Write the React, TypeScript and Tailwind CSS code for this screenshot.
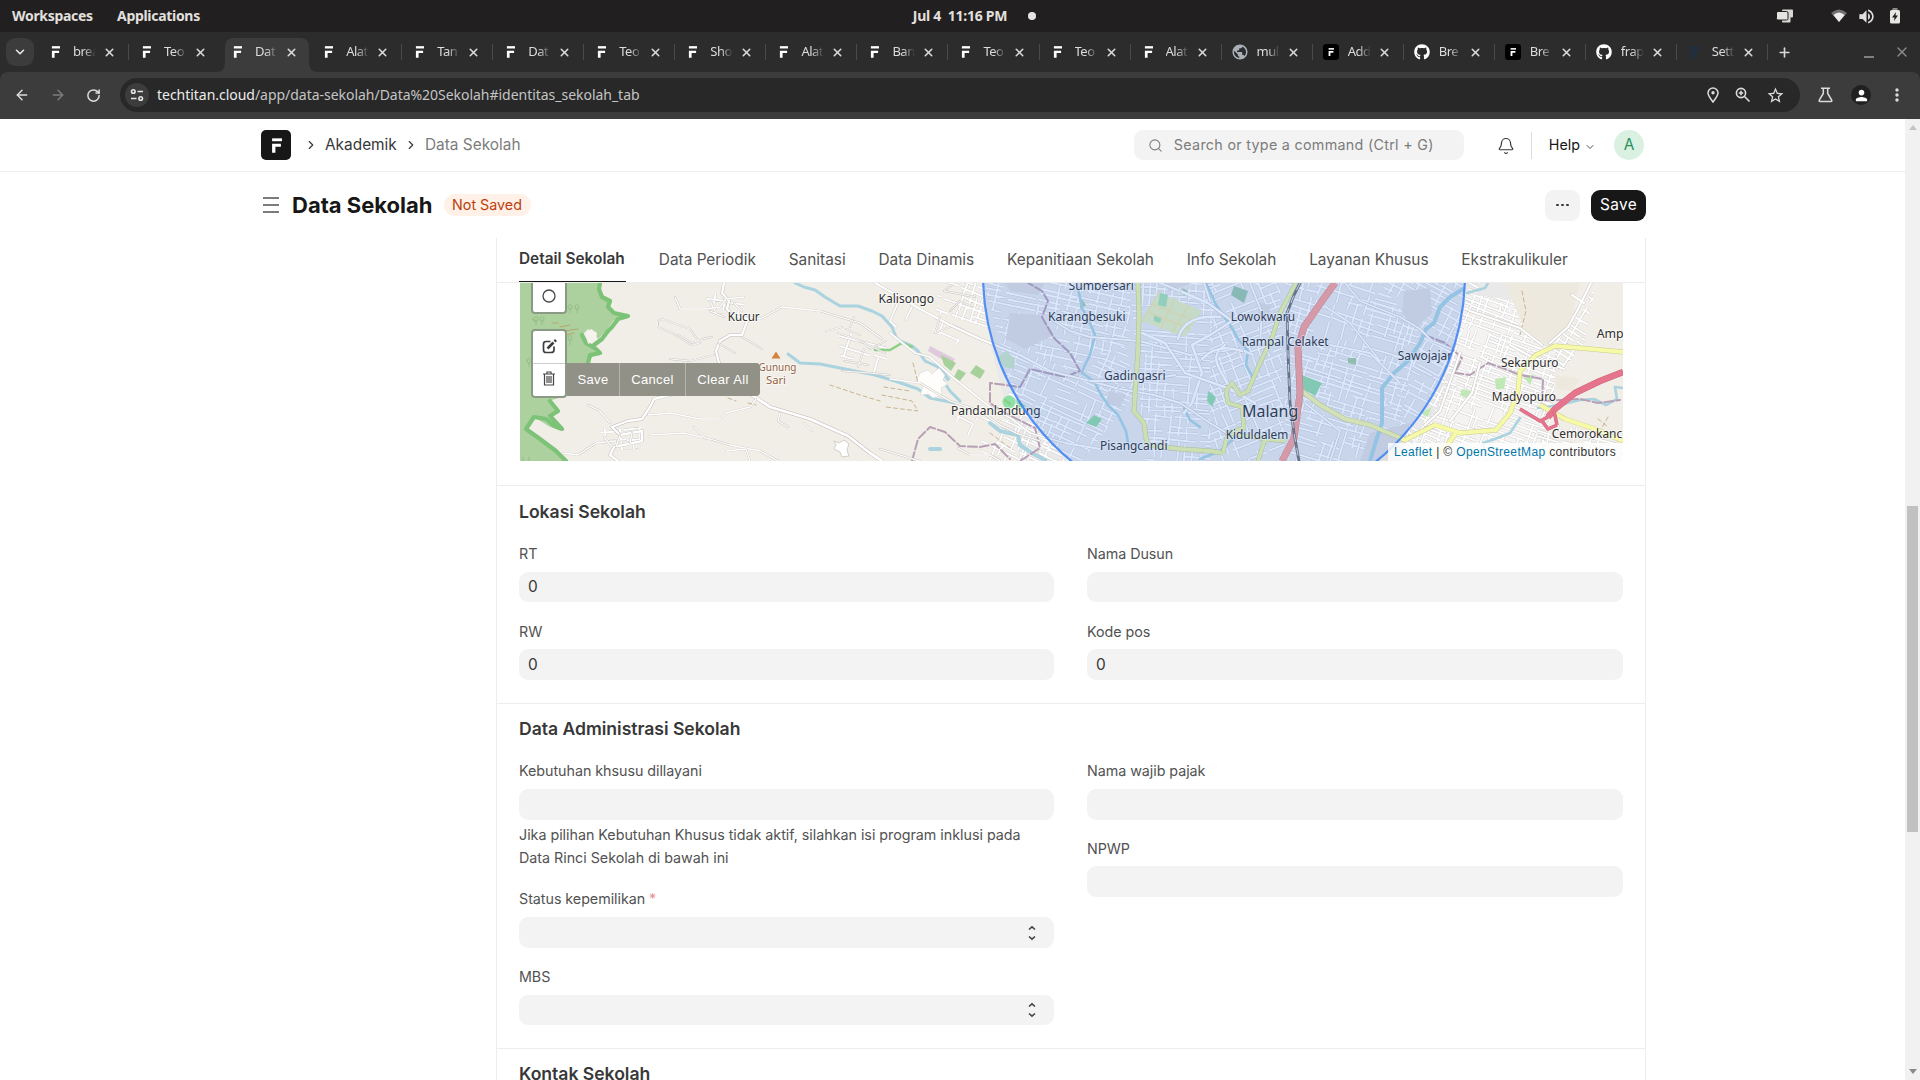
import React from "react";
import { ChevronDown, ChevronRight, X, Plus, ArrowLeft, ArrowRight, RotateCw, Search, Bell } from "lucide-react";
import { FaGithub } from "react-icons/fa";
import { MdStarOutline, MdMoreVert, MdPerson, MdPublic, MdVolumeUp } from "react-icons/md";

type Icon = "f" | "globe" | "fbox" | "github" | "fblue";

const browserTabs: { t: string; i: Icon; active?: boolean }[] = [
  { t: "brea", i: "f" },
  { t: "Teo", i: "f" },
  { t: "Dat", i: "f", active: true },
  { t: "Alat", i: "f" },
  { t: "Tan", i: "f" },
  { t: "Dat", i: "f" },
  { t: "Teo", i: "f" },
  { t: "Sho", i: "f" },
  { t: "Alat", i: "f" },
  { t: "Ban", i: "f" },
  { t: "Teo", i: "f" },
  { t: "Teo", i: "f" },
  { t: "Alat", i: "f" },
  { t: "mul", i: "globe" },
  { t: "Add", i: "fbox" },
  { t: "Bre", i: "github" },
  { t: "Bre", i: "fbox" },
  { t: "frap", i: "github" },
  { t: "Sett", i: "fblue" },
];

function FMark({ className }: { className?: string }) {
  return (
    <svg viewBox="0 0 10 13" className={className} fill="currentColor">
      <path d="M1 0H10V2.6H1Z" />
      <path d="M1 5H9V7.6H4V13H1Z" />
    </svg>
  );
}

function Favicon({ i }: { i: Icon }) {
  if (i === "globe") return <MdPublic className="ml-0.5 size-[18px] text-[#a9b0b8]" />;
  if (i === "github") return <FaGithub className="ml-0.5 size-4 text-white" />;
  if (i === "fbox")
    return (
      <span className="ml-0.5 flex size-4 items-center justify-center rounded-[3px] bg-black">
        <FMark className="h-2 w-1.5 text-white" />
      </span>
    );
  if (i === "fblue") return <FMark className="h-[11px] w-[9px] text-[#17314a]" />;
  return <FMark className="h-[12px] w-[9px] text-white" />;
}

function Chrome() {
  return (
    <div className="font-['Noto_Sans',sans-serif]">
      <div className="grid h-8 grid-cols-3 items-center bg-[#221f20] text-[14px] font-bold tracking-[-0.3px] text-[#e2e0df]">
        <div className="-mt-px flex gap-6 pl-3">
          <span className="w-[81px]">Workspaces</span>
          <span className="w-[85px]">Applications</span>
        </div>
        <div className="-mt-px flex items-center justify-center gap-[21px] pl-[29px]">
          <span className="tracking-[-0.27px] whitespace-pre">Jul 4  11:16 PM</span>
          <span className="size-2 rounded-full bg-[#e6e4e3]" />
        </div>
        <div className="flex items-center justify-end pr-[19px]">
          <svg className="mr-[37px] h-4 w-[18px]" viewBox="0 0 18 16">
            <rect x="6" y="1.500" width="11" height="8" rx="1" fill="#d8d6d5" />
            <rect x="6" y="9" width="8.500" height="5.500" rx="0.8" fill="#d8d6d5" />
            <rect x="0.5" y="3.500" width="11.500" height="8.500" rx="1.500" fill="#e6e4e3" stroke="#221f20" strokeWidth="1" />
          </svg>
          <svg className="mr-2.5 h-[14px] w-4" viewBox="0 0 16 14">
            <path d="M0 4Q8 -3 16 4L8 13Z" fill="#716f6f" />
            <path d="M2.4 6Q8 1 13.6 6L8 13Z" fill="#efedec" />
          </svg>
          <MdVolumeUp className="mr-[13px] size-[19px]" />
          <svg className="h-4 w-3" viewBox="0 0 12 16">
            <path d="M3.500 0h5v2.500h-5z" fill="#8a8887" />
            <rect x="1" y="2" width="10" height="13.500" rx="1.500" fill="#e8e6e5" />
            <path d="M7 4L3 9.5h2.500L5 13l4-5.500H6.500z" fill="#221f20" />
          </svg>
        </div>
      </div>

      <div className="flex h-10 items-center bg-[#2c2c2c]">
        <div className="ml-1.5 flex h-7 w-7 items-center justify-center rounded-[9px] bg-[#3c3c3c]">
          <ChevronDown className="size-3.5 text-[#e6e6e6]" strokeWidth={2.8} />
        </div>
        <div className="ml-1 flex h-full">
          {browserTabs.map((b, k) => (
            <div key={k} className="relative flex h-full w-[91.05px] items-center">
              {b.active && (
                <svg className="absolute top-1.5 -left-1 h-[34px] w-[104px]" viewBox="0 0 104 34">
                  <path d="M0 34Q9 34 9 25V9Q9 0 18 0H84Q93 0 93 9V25Q93 34 102 34Z" fill="#3c3c3c" />
                </svg>
              )}
              <span className="relative flex w-[35px] shrink-0 items-center justify-center">
                <Favicon i={b.i} />
              </span>
              <span className="relative -mt-px w-6 shrink-0 text-[13px] tracking-[-0.5px] whitespace-nowrap text-[#dcdcdc] [mask-image:linear-gradient(to_right,black_45%,transparent_95%)]">
                {b.t}
              </span>
              <X className="relative ml-1.5 size-[13px] text-[#dadada]" strokeWidth={2.8} />
              {k !== 1 && k !== 2 && <span className="absolute right-0 h-4 w-px bg-[#4a4a4a]" />}
            </div>
          ))}
        </div>
        <Plus className="ml-[9px] size-[15px] text-[#d8d8d8]" strokeWidth={2.6} />
        <span className="mt-[9px] ml-[72px] h-0.5 w-2.5 bg-[#808080]" />
        <X className="ml-5 size-4 text-[#8a8a8a]" strokeWidth={2} />
      </div>

      <div className="bg-[#2c2c2c]">
        <div className="flex h-[47px] items-center rounded-t-lg bg-[#3c3c3c] pb-px text-[#dcdcdc]">
          <ArrowLeft className="ml-3.5 size-4" strokeWidth={2.2} />
          <ArrowRight className="ml-5 size-4 text-[#7c7c7c]" strokeWidth={2.2} />
          <RotateCw className="ml-5 size-[15px]" strokeWidth={2.4} />
          <div className="ml-[19px] flex h-[34px] w-[1680px] items-center rounded-full bg-[#282828]">
            <span className="ml-[5px] flex size-6 items-center justify-center rounded-full bg-[#3c3c3c]">
              <svg className="size-3.5" viewBox="0 0 14 14" fill="none" stroke="#e4e4e4" strokeWidth="1.6">
                <circle cx="3.300" cy="3.500" r="1.800" />
                <path d="M7.500 3.500H13M1 10.500H6.500" />
                <circle cx="10.700" cy="10.500" r="1.800" />
              </svg>
            </span>
            <span className="ml-2 -mt-px text-[14px] tracking-[-0.03px] whitespace-nowrap text-[#c4c4c4]">
              <span className="text-[#ececec]">techtitan.cloud</span>/app/data-sekolah/Data%20Sekolah#identitas_sekolah_tab
            </span>
            <span className="ml-auto flex items-center gap-4 pr-[15px]">
              <svg className="h-4 w-3" viewBox="0 0 12 16" fill="none" stroke="currentColor" strokeWidth="1.500">
                <path d="M6 15C3 11 1 8.500 1 6A5 5 0 0 1 11 6C11 8.500 9 11 6 15Z" />
                <circle cx="6" cy="5.800" r="1.700" fill="currentColor" stroke="none" />
              </svg>
              <svg className="size-4" viewBox="0 0 16 16" fill="none" stroke="currentColor" strokeWidth="1.600">
                <circle cx="6" cy="6" r="4.600" />
                <path d="M9.500 9.500L14.500 14.500" />
                <path d="M6 3.800V8.200M3.800 6H8.200" />
              </svg>
              <MdStarOutline className="-ml-px size-[19px]" />
            </span>
          </div>
          <svg className="ml-[18px] h-4 w-[15px]" viewBox="0 0 15 16" fill="none" stroke="currentColor" strokeWidth="1.500">
            <path d="M3 1.200H12M5.300 1.200V6.500L1.300 13.200Q0.800 14.500 2 14.500H13Q14.200 14.500 13.700 13.200L9.700 6.500V1.200" />
          </svg>
          <span className="ml-[18px] flex size-5 items-center justify-center rounded-full bg-[#202020]">
            <MdPerson className="size-[17px] text-white" />
          </span>
          <MdMoreVert className="ml-4 size-5" />
        </div>
      </div>
    </div>
  );
}

/* ---------- map ---------- */

function makeRand(seed: number) {
  let s = seed;
  return () => {
    s = (s * 1664525 + 1013904223) % 4294967296;
    return s / 4294967296;
  };
}

const districts: { poly: string; box: [number, number, number, number]; a: number; g: number; seed: number }[] = [
  { poly: "464,0 610,0 610,60 560,90 480,60", box: [450, -30, 620, 110], a: 12, g: 5.500, seed: 2 },
  { poly: "480,60 560,90 605,60 616,110 560,180 500,178", box: [460, 40, 640, 190], a: 24, g: 5, seed: 5 },
  { poly: "610,0 700,0 690,60 690,178 625,178", box: [590, -20, 710, 190], a: 4, g: 5, seed: 7 },
  { poly: "690,0 760,0 765,178 690,178", box: [660, -20, 790, 190], a: -22, g: 6, seed: 9 },
  { poly: "765,0 860,0 900,50 870,178 765,178", box: [740, -20, 910, 200], a: 17, g: 5, seed: 13 },
  { poly: "860,0 960,0 935,70 900,178 870,178 900,50", box: [840, -20, 980, 190], a: 28, g: 5, seed: 15 },
  { poly: "945,10 1000,18 1040,60 1025,178 880,178 920,120", box: [870, -10, 1060, 200], a: 20, g: 4.600, seed: 19 },
  { poly: "1030,50 1075,5 1065,60 1040,90", box: [1010, 0, 1080, 100], a: 32, g: 6, seed: 22 },
  { poly: "420,0 465,0 470,45 415,30", box: [400, -20, 480, 60], a: 20, g: 6, seed: 25 },
  { poly: "430,132 520,140 545,178 470,178", box: [420, 120, 550, 190], a: 25, g: 6, seed: 28 },
  { poly: "1020,140 1103,150 1103,178 1010,178", box: [1000, 130, 1110, 190], a: 14, g: 6, seed: 31 },
  { poly: "185,8 225,14 222,32 190,30", box: [180, 0, 230, 40], a: 8, g: 9, seed: 35 },
  { poly: "318,44 368,58 366,92 322,88", box: [310, 40, 375, 95], a: 16, g: 9, seed: 37 },
  { poly: "80,145 122,144 120,166 84,168", box: [75, 140, 125, 170], a: -6, g: 8, seed: 41 },
  { poly: "415,34 445,45 438,62 412,52", box: [405, 30, 450, 65], a: 24, g: 6, seed: 44 },
];

function streets(box: [number, number, number, number], gap: number, seed: number) {
  const r = makeRand(seed * 977);
  const [x0, y0, x1, y1] = box;
  let d = "";
  for (let y = y0 - 40; y < y1 + 40; y += gap * (0.8 + r() * 0.7)) {
    let x = x0 - 40;
    while (x < x1 + 40) {
      const l = 12 + r() * 42;
      if (r() > 0.25) d += `M${x.toFixed(1)} ${y.toFixed(1)}l${l.toFixed(1)} ${((r() - 0.5) * 3).toFixed(1)}`;
      x += l + r() * 5;
    }
  }
  for (let x = x0 - 40; x < x1 + 40; x += gap * (1 + r())) {
    let y = y0 - 40;
    while (y < y1 + 40) {
      const l = 8 + r() * 26;
      if (r() > 0.4) d += `M${x.toFixed(1)} ${y.toFixed(1)}l${((r() - 0.5) * 3).toFixed(1)} ${l.toFixed(1)}`;
      y += l + r() * 6;
    }
  }
  return d;
}

function Road({ d, w = 1.3, c = "#ffffff", e = "#c9c6c2" }: { d: string; w?: number; c?: string; e?: string }) {
  return (
    <>
      <path d={d} stroke={e} strokeWidth={w + 0.9} />
      <path d={d} stroke={c} strokeWidth={w} />
    </>
  );
}

const places: { t: string; x: number; y: number; w?: number; s?: number; c?: string }[] = [
  { t: "Kucur", x: 207.700, y: 37.700, w: 32 },
  { t: "Kalisongo", x: 358.500, y: 19.700, w: 55.500 },
  { t: "Gunung", x: 238.500, y: 88, w: 38, s: 11.500, c: "#94623f" },
  { t: "Sari", x: 246, y: 101, w: 20, s: 11.500, c: "#94623f" },
  { t: "Sumbersari", x: 548.500, y: 6.500, w: 65.500 },
  { t: "Karangbesuki", x: 528, y: 38, w: 77.500 },
  { t: "Gadingasri", x: 584, y: 96.600, w: 61.500 },
  { t: "Pandanlandung", x: 431, y: 131.800, w: 89.500 },
  { t: "Pisangcandi", x: 580, y: 167, w: 67.500 },
  { t: "Lowokwaru", x: 710.700, y: 37.500, w: 64.300 },
  { t: "Rampal Celaket", x: 721.700, y: 63, w: 87 },
  { t: "Malang", x: 722, y: 134, w: 56.300, s: 17 },
  { t: "Kiduldalem", x: 705.700, y: 156, w: 62.600 },
  { t: "Sawojajar", x: 877.700, y: 76.600, w: 54.500 },
  { t: "Sekarpuro", x: 981, y: 83.700, w: 57.500 },
  { t: "Madyopuro", x: 971.700, y: 117.700, w: 64.300 },
  { t: "Amp", x: 1076.700, y: 54.700 },
  { t: "Cemorokanc", x: 1031.700, y: 155, w: 70.500 },
];

function MapView() {
  return (
    <div className="relative ml-px h-[178px] w-[1103px] overflow-hidden bg-[#f1eee8]">
      <svg className="block h-[178px] w-[1103px]" viewBox="0 0 1103 178" fill="none" strokeLinejoin="round" strokeLinecap="round">
        <defs>
          {districts.map((s, k) => (
            <clipPath id={`district${k}`} key={k}>
              <polygon points={s.poly} />
            </clipPath>
          ))}
        </defs>

        {/* forest */}
        <path
          d="M0 0H82L80 6L82 14L88 18L88 24L94 30L108 33L106 36L94 37L88 45L84 50L78 56L74 50L68 46L62 52L66 60L76 66L80 72L72 74L68 82L50 92V112L28 118L38 130L28 134L42 147L30 144L14 134L6 146L20 156L36 168L46 178H0Z"
          fill="#add19e"
        />
        <path
          d="M80 0L79 6L82 14L90 18L88 24L94 30L108 33L98 36L92 44L88 48L82 56L74 62M62 52L66 60L76 66L80 70L70 72L68 80M30 118L38 128L30 133L42 146L34 143L26 136L14 134L6 146L20 156L36 168L46 178"
          stroke="#7cc277"
          strokeWidth="4.200"
        />
        <path d="M66 50L71 46L77 50L76 57L68 61Z" fill="#f6f3ee" />
        <path d="M12 36l4 3M32 40h6M40 44l10-2M44 48l14 -2M46 52l8-2" stroke="#b8a46c" strokeWidth="1" />
        <g stroke="#8fbb85" strokeWidth="0.8">
          <path d="M50 25v5M48 24a2 2.500 0 1 1 4 0a2 2.500 0 1 1-4 0M57 25v5M55 24a2 2.500 0 1 1 4 0a2 2.500 0 1 1-4 0M16 37v5M14 36a2 2.500 0 1 1 4 0a2 2.500 0 1 1-4 0M22 37v5M20 36a2 2.500 0 1 1 4 0a2 2.500 0 1 1-4 0M50 57v5M48 55a2 2.500 0 1 1 4 0a2 2.500 0 1 1-4 0M9 79v5M7 78a2 2.500 0 1 1 4 0a2 2.500 0 1 1-4 0M3 174v4M9 174v4" />
        </g>

        {/* urban ground */}
        <path d="M464 0H985L1000 18L1040 60L1025 110V178H545L500 178L470 60Z" fill="#eae9e9" />
        <path d="M945 10L1000 18L1040 60L1022 110L1020 178H880L930 110Z" fill="#f4f3f1" />

        {districts.map((s, k) => {
          const d = streets(s.box, s.g, s.seed);
          const [x0, y0, x1, y1] = s.box;
          return (
            <g key={k} clipPath={`url(#district${k})`}>
              <g transform={`rotate(${s.a} ${(x0 + x1) / 2} ${(y0 + y1) / 2})`} strokeLinecap="butt">
                <path d={d} stroke="#cdcbcb" strokeWidth="2.700" />
                <path d={d} stroke="#ffffff" strokeWidth="1.900" />
              </g>
            </g>
          );
        })}

        {/* open ground */}
        <path d="M490 30L520 32L534 52L505 66L486 56ZM484 0L525 0L518 12L490 8ZM884 8L910 5L912 30L895 46L882 30ZM640 0L672 0L650 8ZM850 150L890 140L880 178H840ZM740 20L752 22L748 32L738 30ZM588 108L606 112L600 124L586 120Z" fill="#e0dedf" />
        <path d="M985 0H1060L1050 40L1030 65L1005 48Z" fill="#eee9df" />
        <path d="M1035 92L1060 96L1052 108L1036 106Z" fill="#eee9df" />

        {/* green and farm patches */}
        <path d="M640 10L682 28L665 54L622 38Z" fill="#e6efbd" />
        <path d="M640 10L648 12L646 24L638 22ZM634 32L642 34L640 40L634 38Z" fill="#a6e0b0" />
        <path d="M640 8L622 38M655 16L640 46M668 23L652 50M634 22L676 38M630 30L670 46" stroke="#f0e7a6" strokeWidth="1.500" />
        <path d="M714 3L728 8L724 20L711 12Z" fill="#9ac7a8" />
        <path d="M486 68L495 76L494 86L484 84L478 74Z" fill="#cfe8c4" />
        <circle cx="489" cy="119" r="6.500" fill="#8ce2a5" />
        <path d="M496 117L506 123L498 128ZM566 140L574 132L582 136L576 144ZM688 108L696 114L692 124L687 118ZM782 92L802 100L795 113L780 104Z" fill="#93dba5" />
        <path d="M410 63L435 76L431 82L408 68Z" fill="#dfc9dc" />
        <path d="M421 72L436 80L431 88L424 82ZM438 86L446 90L440 98L434 94ZM456 82L465 88L460 96L450 90Z" fill="#a6d19a" />
        <path d="M975 96L986 94L984 106L976 106ZM1002 92L1014 92L1010 102ZM900 130L912 124L908 134ZM942 106L951 108L948 116L940 112Z" fill="#bfe8b4" />
        <path d="M828 75L836 75L836 82L828 80ZM560 14L566 22L560 26ZM662 5L668 8L664 13Z" fill="#a5cba0" />

        {/* rivers */}
        <g stroke="#aad3df" strokeWidth="2.600">
          <path d="M275 0L284 4L295 7L305 14L320 23L338 23L352 28L362 33L372 44L376 54L380 58L392 63L398 68L405 78L418 84L422 96L430 108L440 118" strokeWidth="3" />
          <path d="M268 71L280 80L300 81L330 87L355 92L375 98L398 106L410 115L435 120" strokeWidth="3" />
          <path d="M420 86L428 96M470 140L480 148L498 152L500 162L512 170L525 177M410 166L420 166" strokeWidth="4" />
          <path d="M558 5L562 25L570 40L575 52L570 72L564 84L562 90L574 98L580 110L588 122L598 132L606 148L608 160" />
          <path d="M686 0L696 22L712 45L718 56L728 68L726 82L733 95M664 125L670 137L680 144M720 150L700 168L680 176" />
          <path d="M943 6L930 14L920 24L914 40L906 46L900 60L888 78L874 90L862 105L862 125L862 140L856 158L850 178" strokeWidth="4" />
          <path d="M1103 105L1095 104L1097 116L1086 122L1074 116L1060 117L1040 122L1018 125M1000 135L990 150L975 156L963 160L966 170M947 10L965 5L968 0" />
        </g>
        <path d="M355 67L370 67L382 60L392 64M485 117L490 121" stroke="#8ccf86" strokeWidth="2.500" />
        <path
          d="M400 90L408 87L412 91L419 85L425 92L423 97L428 101L421 105L422 112L413 115L409 111L400 112L403 104L397 98Z"
          fill="#fefdfc"
          stroke="#dcd8d2"
          strokeWidth="0.6"
        />

        {/* administrative boundaries */}
        <g stroke="#b79fb4" strokeWidth="2" strokeDasharray="9 3">
          <path d="M505 -2L522 8L528 18L522 34L534 55L550 70L560 88L545 94L510 86L500 104L470 100L470 120L485 130L515 145L520 165L500 178" />
          <path d="M392 178L398 156L410 144L425 149L440 163L460 164L475 161L490 176" />
          <path d="M905 52L925 60L942 75L935 90L950 92L968 80L985 86L1000 92L1023 96L1022 118L1060 116L1078 120L1100 117" />
        </g>

        {/* rural roads */}
        <g strokeWidth="1">
          <Road d="M204 0L202 10L209 18L207 26L212 32L228 36L222 52L210 52L200 58L196 68L199 80L196 92L150 112L134 116L130 124L122 136L108 138L92 144L100 152L122 148L122 158L94 164L90 172L98 178" w={2.400} e="#bdb9b5" />
          <Road d="M226 108L250 124L290 136L328 153L350 170L362 178" w={2.800} e="#bdb9b5" />
          <Road d="M228 34L240 36L262 24L300 28L340 40L362 56M155 14L160 26L185 26L200 24L206 16L224 14M190 18L196 30M214 20L222 28M204 34L190 28" />
          <Road d="M138 38L142 36L170 46L180 60L172 62L152 50L138 44ZM158 52L172 60L182 56L192 54" w={0.9} />
          <Road d="M198 60L215 70M222 54L242 66M150 76L170 78L194 72M144 84L156 84" w={0.9} />
          <Road d="M68 122L80 128L90 140M128 132L150 130L180 136L200 136L206 130L230 124L236 116M130 152L164 150L190 156L210 162L240 168L258 178M44 170L58 172L76 160L96 158" />
          <Road d="M260 130L258 138L268 144M284 140L292 148M174 144L186 156M206 168L226 166L230 178M84 154L92 164M100 152L96 164M112 150L110 160" />
          <Road d="M322 88L350 90L370 92M338 84L344 66L360 62M318 50L336 56L365 70M306 48L322 44M326 46L340 52M334 34L330 44M324 78L348 82" w={0.9} />
          <path d="M314 158L319 160L324 157L329 161L327 167L329 173L322 174L320 169L314 166L316 162Z" fill="#fff" stroke="#d3cec7" />
        </g>
        <Road d="M355 0L380 14L400 26L430 42L460 56L500 72L530 88L570 98L600 106" w={2.200} />
        <Road d="M380 15L370 38L376 44M392 24L386 36M370 50L395 70L410 74L430 92L450 108L470 124L492 136L510 150L545 160L580 166" w={1.800} />
        <Road d="M370 96L400 100L430 118L460 128L480 142L496 150L520 158M360 166L400 178M438 165L450 172L470 172L480 178" />
        <Road d="M366 58L350 66M420 34L415 50L430 44M432 2L424 8L455 14M430 28L440 18L452 24" w={0.9} />
        <g stroke="#c9b48c" strokeWidth="1" strokeDasharray="4 3">
          <path d="M310 102L340 112L360 118M362 112L392 118L398 128L366 124M364 104L390 108M208 115L216 118M228 120L236 122M393 80L398 100M1002 8L1006 28L1000 52M1078 136L1088 144M1088 134L1080 148M470 150L490 165" />
        </g>

        {/* main urban roads */}
        <Road d="M528 34L550 48L570 54L620 58L670 72L720 66L733 72" w={2} />
        <Road d="M660 8L688 20L712 38L690 52L672 62L682 90L672 120L664 130" w={2.600} />
        <Road d="M658 56C662 38 680 32 700 34M682 76C695 62 710 64 722 68M705 62C690 72 695 80 712 108M622 50L645 60L665 90L710 106L735 120" w={2.600} />
        <Road d="M600 106L634 112L660 120L690 140L710 152M570 98L620 98L655 92" w={2} />
        <Road d="M660 8L640 0M684 0L690 18M730 0L742 30L740 60" w={2} />
        <Road d="M825 0L840 18L880 34L900 46L912 58L932 66M810 62L850 70L880 100M800 20L830 40L860 78M785 120L820 148L810 178" w={1.800} />
        <Road d="M950 28L1000 45L1022 62M960 80L952 110L930 138M940 70L920 128L905 142M1071 0L1058 26L1048 44L1030 60M1052 12L1064 20M990 62L1012 74L1044 86" w={2.200} />

        <g strokeLinecap="butt">
          <Road d="M618 0L619 30L618 70L616 95L614 128L624 140L626 155L628 162L660 166L690 168L703 170" w={4} c="#eef5a4" e="#c0c988" />
          <Road d="M776 0L760 30L752 55L740 80L728 108L720 112L712 100L706 108L708 120L722 124L724 145L708 150L703 170M708 150L745 156L765 158M745 156L738 178" w={3.600} c="#eef5a4" e="#c0c988" />
          <Road d="M782 108L800 122L825 136L850 142L885 157L915 142L940 150L976 147L990 130L998 108L1000 88L1016 72L1035 63L1060 65L1103 69M936 150L925 165L905 178M1020 122L1045 136L1075 146L1103 158" w={4} c="#f6f9a8" e="#c9cd8c" />
          <Road d="M815 0L802 18L784 44L778 65L780 110L774 155L762 178" w={6} c="#f9a096" e="#dc8078" />
          <Road d="M1103 89L1080 98L1055 110L1035 126L1028 134" w={5.500} c="#e5758d" e="#cf6079" />
          <Road d="M1028 134L1020 138L1010 132L1000 126M1034 128L1037 142M1022 138L1028 146L1037 142" w={2.600} c="#e5758d" e="#cf6079" />
        </g>
        <path d="M780 0L774 12L767 30L768 70L770 120L774 150L779 178" stroke="#707070" strokeWidth="2.800" />
        <path d="M780 0L774 12L767 30L768 70L770 120L774 150L779 178" stroke="#eee" strokeWidth="0.9" strokeDasharray="8 6" strokeLinecap="butt" />
        <path d="M256 68.500L260.500 75.500H251.500Z" fill="#d4823c" />

        <g fontFamily="'Noto Sans', sans-serif" stroke="#ffffff" strokeOpacity="0.6" strokeWidth="2" style={{ paintOrder: "stroke" }}>
          {places.map((p) => (
            <text key={p.t} x={p.x} y={p.y} fontSize={p.s ?? 12.300} fill={p.c ?? "#2e2e2e"} textLength={p.w} lengthAdjust="spacingAndGlyphs">
              {p.t}
            </text>
          ))}
        </g>

        <circle cx="704" cy="-8.500" r="241" fill="#3a82f6" fillOpacity="0.19" stroke="#3a80f4" strokeOpacity="0.85" strokeWidth="2.200" />
      </svg>

      {/* drawing toolbar */}
      <div className="absolute -top-1 left-[11px] flex h-[35px] w-9 items-center justify-center rounded-b border-2 border-[#8b9a84] bg-white">
        <svg className="-mt-0.5 size-3.5" viewBox="0 0 14 14">
          <circle cx="7" cy="7" r="6" fill="none" stroke="#464646" strokeWidth="1.300" />
        </svg>
      </div>
      <div className="absolute top-[46px] left-[11px] flex h-[69px] w-9 flex-col rounded border-2 border-[#8b9a84] bg-white">
        <span className="flex flex-1 items-center justify-center border-b border-[#ccc] pb-px">
          <svg className="size-[15px]" viewBox="0 0 15 15" fill="none" stroke="#3e3e3e" strokeWidth="1.700">
            <path d="M8.500 2.500H4Q1.500 2.500 1.500 5V11Q1.500 13.500 4 13.500H9Q12 13.500 12 11V7.500" />
            <path d="M5.500 9.500L11.500 3.500" strokeWidth="2.600" />
            <path d="M12.500 2.500L14 1" strokeWidth="2.600" />
          </svg>
        </span>
        <span className="flex flex-1 items-center justify-center pb-0.5">
          <svg className="h-[15px] w-3" viewBox="0 0 12 15" fill="none" stroke="#464646" strokeWidth="1.200">
            <path d="M0 3H12M4 3V1H8V3M1.500 3V14H10.500V3M4 5V12M6 5V12M8 5V12" />
          </svg>
        </span>
      </div>
      <div className="absolute top-20 left-[47px] flex h-[33px] w-[193px] overflow-hidden rounded-r bg-[#919187] font-['Liberation_Sans',sans-serif] text-[13px] leading-[33px] tracking-[0.37px] text-white">
        <span className="w-[53px] border-r border-[#b5b5ae] text-center">Save</span>
        <span className="w-[66px] border-r border-[#b5b5ae] text-center">Cancel</span>
        <span className="flex-1 text-center">Clear All</span>
      </div>
      <div className="absolute right-0 bottom-0 h-[18px] w-[235px] bg-white/80 pl-1.5 font-['Liberation_Sans',sans-serif] text-[12px] leading-[18px] tracking-[0.35px] whitespace-nowrap text-[#333]">
        <span className="text-[#0078a8]">Leaflet</span> | © <span className="text-[#0078a8]">OpenStreetMap</span> contributors
      </div>
    </div>
  );
}

/* ---------- form ---------- */

function Field({ label, value, select, required, desc }: { label: string; value?: string; select?: boolean; required?: boolean; desc?: React.ReactNode }) {
  return (
    <div className="mb-[19.2px]">
      <div className="mb-[7.1px] h-[20.5px] text-[14.3px] leading-[20.5px] tracking-[-0.04px] text-[#525252]">
        {label}
        {required && <span className="text-[#eb9091]"> *</span>}
      </div>
      <div className="flex h-[30.8px] items-center justify-between rounded-[9px] bg-[#f3f3f3] pr-4 pl-[9px] text-[15.4px] text-[#383838]">
        <span>{value}</span>
        {select && (
          <svg className="mt-px h-4 w-3" viewBox="0 0 12 16" fill="none" stroke="#444" strokeWidth="1.600">
            <path d="M3 4.500L6 1.800L9 4.500M3 11.500L6 14.200L9 11.500" />
          </svg>
        )}
      </div>
      {desc && <p className="mt-[3px] pb-[1.6px] text-[14.3px] leading-[23px] tracking-[-0.022px] text-[#525252]">{desc}</p>}
    </div>
  );
}

function Section({ title, left, right, className }: { title: string; left?: React.ReactNode; right?: React.ReactNode; className: string }) {
  return (
    <section className={`border-t border-[#ededed] px-[22px] ${className}`}>
      <h2 className="mb-5 h-6 text-[17.6px] leading-6 font-semibold tracking-[-0.03px] text-[#383838]">{title}</h2>
      <div className="grid grid-cols-[535px_536px] gap-[33px]">
        <div>{left}</div>
        <div>{right}</div>
      </div>
    </section>
  );
}

const formTabs = ["Detail Sekolah", "Data Periodik", "Sanitasi", "Data Dinamis", "Kepanitiaan Sekolah", "Info Sekolah", "Layanan Khusus", "Ekstrakulikuler"];

export default function App() {
  return (
    <div className="flex h-[1080px] w-[1920px] flex-col overflow-hidden bg-white">
      <Chrome />
      <div className="flex min-h-0 flex-1 font-['Inter',sans-serif]">
        <main className="flex w-[1905px] flex-col overflow-hidden">
          <nav className="flex h-[53px] shrink-0 items-center border-b border-[#ededed] pl-[261px] text-[15.4px]">
            <span className="flex size-[30px] items-center justify-center rounded-[5px] bg-[#171717]">
              <FMark className="h-[15px] w-[11px] text-white" />
            </span>
            <ChevronRight className="ml-[13px] size-3.5 text-[#383838]" />
            <span className="ml-[7px] w-[72px] text-[#383838]">Akademik</span>
            <ChevronRight className="ml-[7px] size-3.5 text-[#383838]" />
            <span className="ml-[7px] text-[#7c7c7c]">Data Sekolah</span>
            <div className="ml-auto flex h-[30px] w-[330px] items-center rounded-[9px] bg-[#f3f3f3] pl-[14px] text-[#7c7c7c]">
              <Search className="size-[15px]" strokeWidth={1.700} />
              <span className="ml-[11px] text-[14.3px] tracking-[0.3px] whitespace-nowrap">Search or type a command (Ctrl + G)</span>
            </div>
            <Bell className="mt-px ml-[33px] size-[18px] text-[#383838]" strokeWidth={1.600} />
            <span className="ml-4 h-[27px] w-px bg-[#dcdcdc]" />
            <span className="ml-[17px] text-[14.3px] text-[#171717]">Help</span>
            <ChevronDown className="mt-[3px] ml-1 size-3 text-[#525252]" strokeWidth={2} />
            <span className="mr-[261px] ml-[18px] flex size-[30px] items-center justify-center rounded-full bg-[#daf0e1] text-[#278f5e]">A</span>
          </nav>

          <header className="flex h-[66px] shrink-0 items-center pl-[263px]">
            <svg className="h-[18px] w-4" viewBox="0 0 16 18" stroke="#525252" strokeWidth="1.300">
              <path d="M0 2H16M0 9H16M0 16H16" />
            </svg>
            <h1 className="ml-[13px] text-[22px] font-bold text-[#171717]">Data Sekolah</h1>
            <span className="ml-[11px] flex h-[22px] w-[87px] items-center justify-center rounded-full bg-[#fff1e7] text-[14.3px] text-[#bd3e0c]">Not Saved</span>
            <span className="ml-auto flex h-[31px] w-[35px] items-center justify-center gap-[2.500px] rounded-[9px] bg-[#f3f3f3]">
              <i className="size-[2.500px] rounded-full bg-[#383838]" />
              <i className="size-[2.500px] rounded-full bg-[#383838]" />
              <i className="size-[2.500px] rounded-full bg-[#383838]" />
            </span>
            <button className="mr-[259px] ml-[11px] h-[31px] w-[55px] rounded-[9px] bg-[#171717] pb-px text-[15.4px] tracking-[0.02em] text-white">Save</button>
          </header>

          <div className="ml-[496px] w-[1150px] flex-1 border-x border-[#ededed]">
            <div className="flex h-[45px] gap-[32.8px] border-b border-[#ededed] pl-[22px] text-[15.4px] text-[#525252]">
              {formTabs.map((t, k) =>
                k === 0 ? (
                  <span key={t} className="h-[44px] w-[107px] border-b border-[#171717] pt-[9px] font-semibold whitespace-nowrap text-[#383838]">
                    {t}
                  </span>
                ) : (
                  <span key={t} className="pt-2.5 whitespace-nowrap">
                    {t}
                  </span>
                ),
              )}
            </div>
            <div className="h-[202px] pl-[22px]">
              <MapView />
            </div>
            <Section
              title="Lokasi Sekolah"
              className="h-[218px] pt-[14px]"
              left={
                <>
                  <Field label="RT" value="0" />
                  <Field label="RW" value="0" />
                </>
              }
              right={
                <>
                  <Field label="Nama Dusun" />
                  <Field label="Kode pos" value="0" />
                </>
              }
            />
            <Section
              title="Data Administrasi Sekolah"
              className="h-[345px] pt-[13.2px]"
              left={
                <>
                  <Field
                    label="Kebutuhan khsusu dillayani"
                    desc={
                      <>
                        Jika pilihan Kebutuhan Khusus tidak aktif, silahkan isi program inklusi pada
                        <br />
                        Data Rinci Sekolah di bawah ini
                      </>
                    }
                  />
                  <Field label="Status kepemilikan" select required />
                  <Field label="MBS" select />
                </>
              }
              right={
                <>
                  <Field label="Nama wajib pajak" />
                  <Field label="NPWP" />
                </>
              }
            />
            <Section title="Kontak Sekolah" className="h-[200px] pt-[13px]" />
          </div>
        </main>
        <div className="flex w-[15px] flex-col items-center bg-[#f1f1f1]">
          <span className="mt-[6px] border-x-4 border-b-5 border-x-transparent border-b-[#c4c4c4]" />
          <span className="mt-[376px] h-[326px] w-[11px] bg-[#c1c1c1]" />
          <span className="mt-auto mb-[6px] border-x-4 border-t-5 border-x-transparent border-t-[#8a8a8a]" />
        </div>
      </div>
    </div>
  );
}
